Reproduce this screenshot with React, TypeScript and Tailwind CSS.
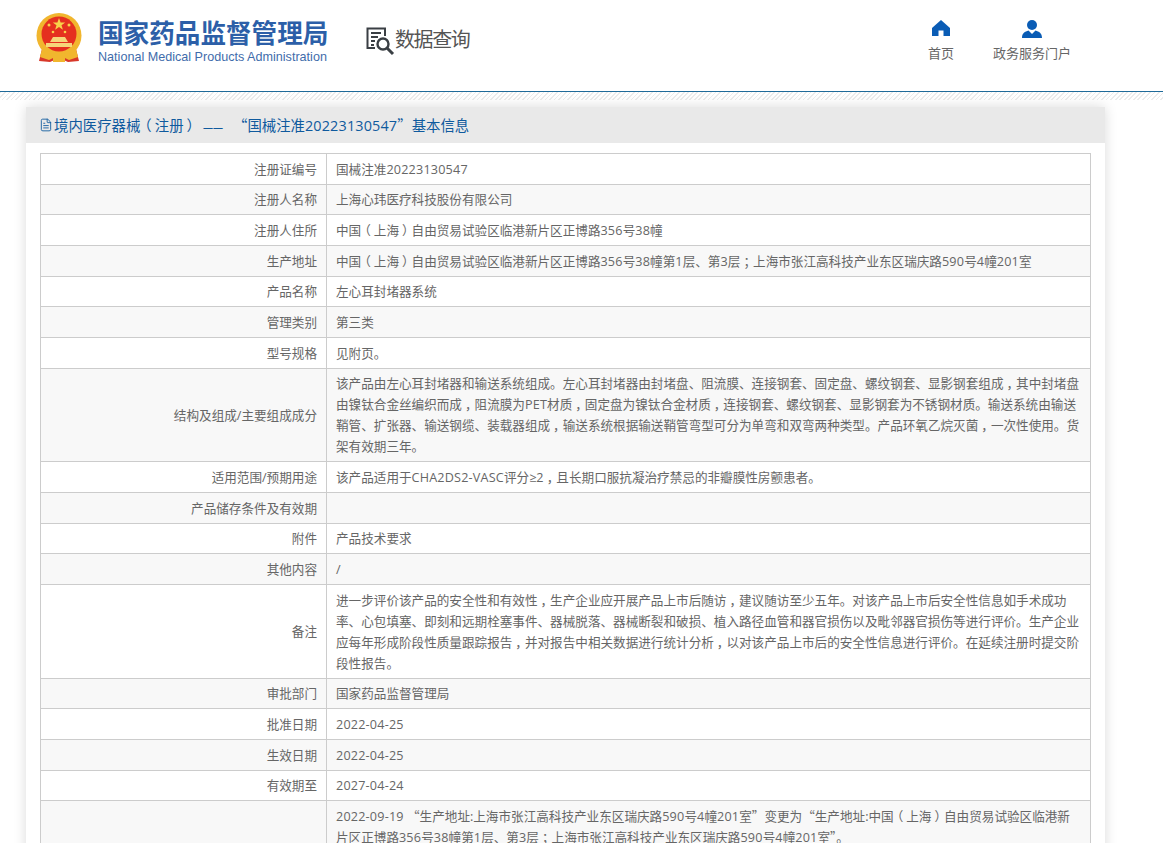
import React from 'react';
import { FileText } from 'lucide-react';

const rows: { label: string; value: string }[] = [
  { label: '注册证编号', value: '国械注准20223130547' },
  { label: '注册人名称', value: '上海心玮医疗科技股份有限公司' },
  { label: '注册人住所', value: '中国（上海）自由贸易试验区临港新片区正博路356号38幢' },
  { label: '生产地址', value: '中国（上海）自由贸易试验区临港新片区正博路356号38幢第1层、第3层；上海市张江高科技产业东区瑞庆路590号4幢201室' },
  { label: '产品名称', value: '左心耳封堵器系统' },
  { label: '管理类别', value: '第三类' },
  { label: '型号规格', value: '见附页。' },
  { label: '结构及组成/主要组成成分', value: '该产品由左心耳封堵器和输送系统组成。左心耳封堵器由封堵盘、阻流膜、连接钢套、固定盘、螺纹钢套、显影钢套组成，其中封堵盘由镍钛合金丝编织而成，阻流膜为PET材质，固定盘为镍钛合金材质，连接钢套、螺纹钢套、显影钢套为不锈钢材质。输送系统由输送鞘管、扩张器、输送钢缆、装载器组成，输送系统根据输送鞘管弯型可分为单弯和双弯两种类型。产品环氧乙烷灭菌，一次性使用。货架有效期三年。' },
  { label: '适用范围/预期用途', value: '该产品适用于CHA2DS2-VASC评分≥2，且长期口服抗凝治疗禁忌的非瓣膜性房颤患者。' },
  { label: '产品储存条件及有效期', value: '' },
  { label: '附件', value: '产品技术要求' },
  { label: '其他内容', value: '/' },
  { label: '备注', value: '进一步评价该产品的安全性和有效性，生产企业应开展产品上市后随访，建议随访至少五年。对该产品上市后安全性信息如手术成功率、心包填塞、即刻和远期栓塞事件、器械脱落、器械断裂和破损、植入路径血管和器官损伤以及毗邻器官损伤等进行评价。生产企业应每年形成阶段性质量跟踪报告，并对报告中相关数据进行统计分析，以对该产品上市后的安全性信息进行评价。在延续注册时提交阶段性报告。' },
  { label: '审批部门', value: '国家药品监督管理局' },
  { label: '批准日期', value: '2022-04-25' },
  { label: '生效日期', value: '2022-04-25' },
  { label: '有效期至', value: '2027-04-24' },
  { label: '', value: '2022-09-19 “生产地址:上海市张江高科技产业东区瑞庆路590号4幢201室”变更为“生产地址:中国（上海）自由贸易试验区临港新片区正博路356号38幢第1层、第3层；上海市张江高科技产业东区瑞庆路590号4幢201室”。' },
];

// punctuation sits centred in its em box in the reference, quotes need the CJK font
const Text = ({ children }: { children: string }) => (
  <>
    {children.split(/([（）“”，；]|[0-9A-Za-z-]+)/).map((part, i) => {
      if (part === '（') return <span key={i} className="relative left-[-3px]">（</span>;
      if (part === '）' || part === '，' || part === '；') return <span key={i} className="relative left-[3px]">{part}</span>;
      if (part === '“' || part === '”') return <span key={i} className="leading-[0] font-['Noto_Sans_CJK_SC',sans-serif]">{part}</span>;
      if (/^[0-9A-Za-z-]+$/.test(part)) return <span key={i} className="tracking-[0.2px]">{part}</span>;
      return part;
    })}
  </>
);

const Emblem = () => (
  <svg width="46" height="50" viewBox="0 0 46 50">
    <path d="M6 36 L3 48 L14 49 L23 45 L32 49 L43 48 L40 36 Z" fill="#d8382a" />
    <circle cx="23" cy="22.5" r="22.5" fill="#f1b62e" />
    <circle cx="23" cy="21" r="17.5" fill="#e5301f" />
    <path d="M23 5 l1.6 4.4 4.6 0 -3.7 2.8 1.4 4.5 -3.9-2.7 -3.9 2.7 1.4-4.5 -3.7-2.8 4.6 0z" fill="#f8d24a" />
    <circle cx="13" cy="12" r="1.5" fill="#f8d24a" />
    <circle cx="33" cy="12" r="1.5" fill="#f8d24a" />
    <circle cx="17" cy="19" r="1.3" fill="#f8d24a" />
    <circle cx="29" cy="19" r="1.3" fill="#f8d24a" />
    <path d="M14 29 L17 24 H29 L32 29 Z M10 34 V30 H36 V34 Z" fill="#f6d679" />
    <path d="M6 36 Q14 44 23 39 Q32 44 40 36 L42 44 L33 47 L23 42 L13 47 L4 44 Z" fill="#f1b62e" />
    <path d="M17 43 h12 v6 h-12z" fill="#f1b62e" />
  </svg>
);

const QueryIcon = () => (
  <svg width="30" height="30" viewBox="0 0 30 30" fill="none" stroke="#3a3f44">
    <path d="M9 21 H1.5 V1.5 H19 V9" strokeWidth="2" />
    <path d="M5 6 H15 M5 10 H12 M5 14 H9 M5 18 H8" strokeWidth="1.8" />
    <circle cx="17" cy="17" r="5.5" strokeWidth="2.4" />
    <path d="M21 21 L27 27" strokeWidth="3" />
  </svg>
);

const HomeIcon = () => (
  <svg width="18" height="16" viewBox="0 0 18 16">
    <path d="M9 0 L18 8 V16 H11.5 V10.5 H6.5 V16 H0 V8 Z" fill="#0a5cb5" />
  </svg>
);

const UserIcon = () => (
  <svg width="20" height="18" viewBox="0 0 20 18">
    <circle cx="10" cy="5" r="5" fill="#0a5cb5" />
    <path d="M0 18 C0 13 3 11.5 6.5 10.5 L10 14 L13.5 10.5 C17 11.5 20 13 20 18 Z" fill="#0a5cb5" />
  </svg>
);

export default function App() {
  return (
    <div className="bg-white font-['Open_Sans','Noto_Sans_CJK_SC','Liberation_Sans',sans-serif] text-[12.6px] text-[#666]">
      {/* Header */}
      <header className="h-[92px] flex border-b border-[#1f6a99]">
        <div className="pl-[36px] pt-[13px]">
          <Emblem />
        </div>
        <div className="ml-[16px] pt-[14px] w-[232px]">
          <div className="text-[25.6px] leading-[36px] font-bold text-[#2c5fa8] font-['Noto_Sans_CJK_SC',sans-serif] whitespace-nowrap">国家药品监督管理局</div>
          <div className="text-[12.6px] leading-[14px] text-[#3f6cab] font-['Liberation_Sans',sans-serif] whitespace-nowrap">National Medical Products Administration</div>
        </div>
        <div className="ml-[36px] pt-[27px] flex items-start">
          <QueryIcon />
          <span className="ml-[-1px] text-[20px] leading-[24px] tracking-[-1.4px] text-[#555] font-['Noto_Sans_CJK_SC',sans-serif]">数据查询</span>
        </div>
        <nav className="ml-auto mr-[93px] pt-[20px] flex text-[#666] text-[13px] font-['Noto_Sans_CJK_SC',sans-serif]">
          <a className="flex flex-col items-center w-[26px] mr-[40px]">
            <HomeIcon />
            <span className="mt-[7px] leading-[20px] whitespace-nowrap">首页</span>
          </a>
          <a className="flex flex-col items-center w-[76px]">
            <UserIcon />
            <span className="mt-[5px] leading-[20px] whitespace-nowrap">政务服务门户</span>
          </a>
        </nav>
      </header>
      <div className="h-[8px] bg-[repeating-linear-gradient(135deg,#ececec_0,#ececec_1.2px,#ffffff_1.2px,#ffffff_3.2px)]" />

      {/* Card */}
      <main className="mx-[26px] mt-[7px] w-[1079px] bg-white shadow-[0_0_12px_rgba(0,0,0,0.15)]">
        <div className="h-[36px] bg-[#e9e9e9] pl-[13px] flex items-center text-[14.4px] text-[#0f5a9e] whitespace-nowrap">
          <FileText size={14} strokeWidth={1.5} />
          <span className="ml-px">
            <Text>境内医疗器械（注册）</Text>
            <span className="ml-[5px] mr-[10px] text-[10px]">——</span>
            <span className="font-['Noto_Sans_CJK_SC',sans-serif]">“</span>
            国械注准<span className="tracking-[0.16px]">20223130547</span>
            <span className="font-['Noto_Sans_CJK_SC',sans-serif]">”</span>
            基本信息
          </span>
        </div>
        <div className="px-[14px] pt-[10px] pb-[20px]">
          <table className="w-[1051px] table-fixed border-collapse">
            <colgroup>
              <col className="w-[286px]" />
              <col />
            </colgroup>
            <tbody>
              {rows.map((row, idx) => (
                <tr key={idx} className={idx % 2 === 1 ? 'bg-[#f8f8f8]' : 'bg-white'}>
                  <td className="border border-[#ccc] text-right pr-[9px] leading-[21px] pt-[4.83px] pb-[3.83px]">{row.label}</td>
                  <td className="border border-[#ccc] px-[9px] leading-[21px] pt-[4.83px] pb-[3.83px]"><Text>{row.value}</Text></td>
                </tr>
              ))}
            </tbody>
          </table>
        </div>
      </main>
    </div>
  );
}
